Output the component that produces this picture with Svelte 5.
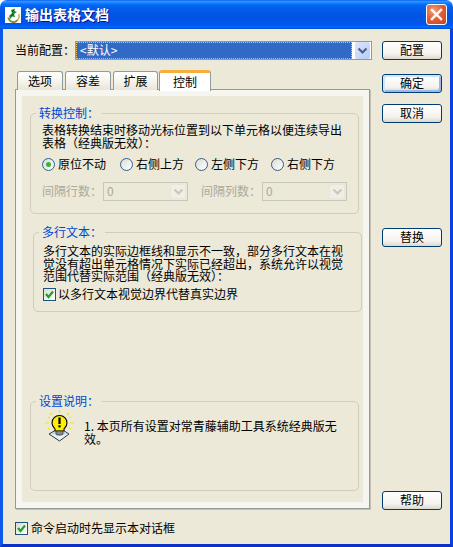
<script>
  const tabs = [
    { label: '选项', w: 46 },
    { label: '容差', w: 46 },
    { label: '扩展', w: 45 },
  ];
  const radios = ['原位不动', '右侧上方', '左侧下方', '右侧下方'];
</script>

<div class="window">
  <header class="titlebar">
    <svg class="appicon" width="16" height="16" viewBox="0 0 16 16">
      <rect width="16" height="16" fill="#fff" />
      <path d="M3.5 10.5a5 5 0 0 0 9 2.5" fill="none" stroke="#8a8a3a" stroke-width="2" />
      <path d="M12.5 13a5 5 0 0 0 1-6" fill="none" stroke="#b8b860" stroke-width="1.5" />
      <path d="M4 9 L7 6 L6 3 L10 1.5 L9.5 4 L12 5 L9 7 L10 10 L7 9.5 L5.5 12 Z" fill="#1f8a2e" />
      <path d="M7 5 L9 3 M6 9 L9 7" stroke="#0d4f1a" stroke-width="1" fill="none" />
    </svg>
    <span class="title">输出表格文档</span>
    <button class="close" aria-label="关闭">
      <svg width="13" height="13" viewBox="0 0 13 13">
        <path d="M2 2 L11 11 M11 2 L2 11" stroke="#fff" stroke-width="2.4" stroke-linecap="square" />
      </svg>
    </button>
  </header>

  <div class="client">
    <div class="main">
      <div class="left">
        <div class="config">
          <span class="config-label">当前配置：</span>
          <div class="combo">
            <div class="combo-value"><span>&lt;默认&gt;</span></div>
            <div class="combo-btn">
              <svg width="11" height="8" viewBox="0 0 11 8"><path d="M1.5 1.5 L5.5 5.5 L9.5 1.5" fill="none" stroke="#4d6185" stroke-width="2.2" /></svg>
            </div>
          </div>
        </div>

        <div class="tabs">
          {#each tabs as t}
            <div class="tab" style="width:{t.w}px">{t.label}</div>
          {/each}
          <div class="tab active">控制</div>
        </div>

        <div class="panel">
          <div class="inner">
            <fieldset class="group g1">
              <legend>转换控制：</legend>
              <p class="txt">表格转换结束时移动光标位置到以下单元格以便连续导出表格（经典版无效）：</p>
              <div class="radios">
                {#each radios as r, i}
                  <div class="radio-item">
                    <span class="radio" class:on={i === 0}></span>
                    <span>{r}</span>
                  </div>
                {/each}
              </div>
              <div class="spins">
                <span class="dis-label">间隔行数：</span>
                <div class="dis-combo"><span>0</span><i><svg width="11" height="8" viewBox="0 0 11 8"><path d="M1.5 1.5 L5.5 5.5 L9.5 1.5" fill="none" stroke="#c9c7ba" stroke-width="2.2" /></svg></i></div>
                <span class="dis-label second">间隔列数：</span>
                <div class="dis-combo"><span>0</span><i><svg width="11" height="8" viewBox="0 0 11 8"><path d="M1.5 1.5 L5.5 5.5 L9.5 1.5" fill="none" stroke="#c9c7ba" stroke-width="2.2" /></svg></i></div>
              </div>
            </fieldset>

            <fieldset class="group g2">
              <legend>多行文本：</legend>
              <p class="txt">多行文本的实际边框线和显示不一致，部分多行文本在视觉没有超出单元格情况下实际已经超出，系统允许以视觉范围代替实际范围（经典版无效）：</p>
              <div class="check-row inner-check">
                <span class="check">
                  <svg width="11" height="11" viewBox="0 0 11 11"><path d="M2 5 L4.5 8 L9 2.5" fill="none" stroke="#21a121" stroke-width="2.2" /></svg>
                </span>
                <span>以多行文本视觉边界代替真实边界</span>
              </div>
            </fieldset>

            <fieldset class="group g3">
              <legend>设置说明：</legend>
              <div class="note">
                <svg class="bulb" width="32" height="32" viewBox="0 0 32 32">
                  <path d="M16.5 18 L26 24 L16.5 31 L6 24 Z" fill="#e8f4f8" stroke="#333" stroke-width="1" />
                  <path d="M8 24 L16.5 18 L25 24 L16.5 25 Z" fill="#a8dce8" />
                  <path d="M16.5 0 V3 M7 3 L9 5 M26 3 L24 5 M2 13 H6 M27 13 H31 M5 7 L7 8 M28 7 L26 8 M5 19 L7 18 M28 19 L26 18" stroke="#f5e800" stroke-width="1.2" />
                  <path d="M9 13 a7.5 7.5 0 0 1 15 0 c0 3-2 4.5-3 6 v2 h-9 v-2 c-1-1.5-3-3-3-6z" fill="#ffef00" stroke="#000" stroke-width="1.1" />
                  <rect x="13" y="21" width="7" height="4" rx="1.5" fill="#8a8a8a" stroke="#333" stroke-width="0.8" />
                  <rect x="15.4" y="7.5" width="2.2" height="6.5" fill="#000" />
                  <rect x="15.4" y="15.2" width="2.2" height="2.2" fill="#000" />
                </svg>
                <p class="txt note-txt">1. 本页所有设置对常青藤辅助工具系统经典版无效。</p>
              </div>
            </fieldset>
          </div>
        </div>

        <div class="check-row startup">
          <span class="check">
            <svg width="11" height="11" viewBox="0 0 11 11"><path d="M2 5 L4.5 8 L9 2.5" fill="none" stroke="#21a121" stroke-width="2.2" /></svg>
          </span>
          <span>命令启动时先显示本对话框</span>
        </div>
      </div>

      <div class="right">
        <button class="btn">配置</button>
        <button class="btn default b-ok">确定</button>
        <button class="btn b-cancel">取消</button>
        <button class="btn b-replace">替换</button>
        <button class="btn b-help">帮助</button>
      </div>
    </div>
  </div>
</div>

<style>
  :global(body) {
    margin: 0;
    background: #fff;
  }
  .window {
    width: 453px;
    height: 547px;
    display: flex;
    flex-direction: column;
    font-family: "Noto Sans CJK SC", "Liberation Sans", sans-serif;
    font-size: 12px;
    line-height: 12.5px;
    color: #000;
    overflow: hidden;
  }
  .titlebar {
    height: 29px;
    flex: none;
    display: flex;
    align-items: center;
    padding: 0 6px 0 5px;
    box-sizing: border-box;
    border-radius: 7px 7px 0 0;
    background: linear-gradient(180deg, #0058ee 0%, #3593ff 4%, #288eff 7%, #127dff 11%, #036ffc 15%, #0262ee 22%, #0057e5 44%, #0054e3 62%, #0055eb 80%, #005bf5 89%, #026afe 92%, #0062ef 95%, #0052d6 100%);
  }
  .appicon {
    flex: none;
  }
  .title {
    margin-left: 4px;
    font-size: 14px;
    font-weight: 700;
    color: #fff;
    text-shadow: 1px 1px 0 #0f1089;
    flex: 1;
  }
  .close {
    width: 21px;
    height: 21px;
    padding: 0;
    border: 1px solid #fff;
    border-radius: 3px;
    background: radial-gradient(circle at 35% 30%, #f0a080 0%, #e2603a 45%, #c8401c 100%);
    display: flex;
    align-items: center;
    justify-content: center;
  }
  .client {
    flex: 1;
    min-height: 0;
    display: flex;
    background: #ece9d8;
    border-left: 3px solid #0f58ea;
    border-right: 3px solid #0a3fe0;
    border-bottom: 3px solid #0a31c8;
  }
  .main {
    flex: 1;
    display: flex;
    padding: 12px 0 0 12px;
    gap: 12px;
  }
  .left {
    width: 355px;
    display: flex;
    flex-direction: column;
  }
  .config {
    display: flex;
    align-items: center;
    height: 19px;
  }
  .config-label {
    width: 60px;
  }
  .combo {
    width: 297px;
    height: 19px;
    box-sizing: border-box;
    border: 1px solid #7f9db9;
    background: #fff;
    display: flex;
    padding: 0 1px 0 0;
    flex: none;
    margin-right: -2px;
  }
  .combo-value {
    width: 276px;
    background: #316ac5;
    color: #fff;
    outline: 1px dotted #e8c060;
    outline-offset: -1px;
    display: flex;
    align-items: center;
    padding-left: 4px;
    box-sizing: border-box;
  }
  .combo-btn {
    width: 15px;
    margin: 0 0 0 3px;
    background: linear-gradient(135deg, #dbe5fd, #b8cbf9);
    border-radius: 2px;
    display: flex;
    align-items: center;
    justify-content: center;
  }
  .tabs {
    display: flex;
    margin-top: 11px;
    padding-left: 2px;
    height: 19px;
    gap: 2px;
    align-items: flex-start;
    position: relative;
    z-index: 1;
  }
  .tab {
    height: 19px;
    box-sizing: border-box;
    border: 1px solid #919b9c;
    border-bottom: none;
    border-radius: 3px 3px 0 0;
    background: linear-gradient(180deg, #fff, #f3f2ea 60%, #e8e6da);
    display: flex;
    align-items: center;
    justify-content: center;
  }
  .tab.active {
    width: 52px;
    height: 21px;
    margin-top: -1px;
    margin-left: -1px;
    border-top: 3px solid #f5b03c;
    background: #fff;
    padding-top: 1px;
  }
  .panel {
    height: 420px;
    box-sizing: border-box;
    border: 1px solid #919b9c;
    margin-top: -1px;
    background: #f6f5ef;
    padding: 6px;
    box-shadow: 1px 1px 0 #c4c1b0;
  }
  .inner {
    height: 100%;
    background: #ece9d8;
    display: flex;
    flex-direction: column;
    align-items: flex-start;
  }
  .group {
    box-sizing: border-box;
    width: 329px;
    margin: 0;
    padding: 0 0 0 11px;
    border: 1px solid #d0cebb;
    border-radius: 5px;
    min-width: 0;
  }
  .group legend {
    padding: 0 3px;
    margin-left: -6px;
    color: #0046d5;
    line-height: 14px;
  }
  .g1 {
    margin: 10px 0 0 8px;
    height: 108px;
  }
  .g2 {
    margin: 11px 0 0 11px;
    height: 87px;
    padding-left: 9px;
  }
  .g2 legend {
    margin-left: -4px;
  }
  .g2 .txt {
    margin-top: 6px;
  }
  .g3 {
    margin: 82px 0 0 8px;
    height: 97px;
  }
  .txt {
    margin: 4px 0 0 0;
    width: 301px;
  }
  .radios {
    display: grid;
    grid-template-columns: 78px 75px 76px auto;
    margin-top: 8px;
  }
  .radio-item {
    display: flex;
    align-items: center;
    gap: 3px;
    height: 14px;
  }
  .radio {
    width: 13px;
    height: 13px;
    box-sizing: border-box;
    border: 1px solid #2f5f8f;
    border-radius: 50%;
    background: linear-gradient(135deg, #dcdcd4, #fff);
    display: flex;
    align-items: center;
    justify-content: center;
  }
  .radio.on::after {
    content: "";
    width: 5px;
    height: 5px;
    border-radius: 50%;
    background: #36b536;
  }
  .spins {
    display: flex;
    align-items: center;
    margin-top: 11px;
    color: #aca899;
  }
  .dis-label {
    width: 61px;
  }
  .dis-label.second {
    width: 61px;
    margin-left: 13px;
  }
  .dis-combo {
    width: 85px;
    height: 19px;
    box-sizing: border-box;
    border: 1px solid #c9c7ba;
    display: flex;
    align-items: center;
    justify-content: space-between;
    padding: 1px 1px 1px 3px;
  }
  .dis-combo i {
    width: 16px;
    height: 15px;
    background: #f0efe6;
    border: 1px solid #e8e6d8;
    box-sizing: border-box;
    border-radius: 2px;
    display: flex;
    align-items: center;
    justify-content: center;
  }
  .check-row {
    display: flex;
    align-items: center;
    gap: 3px;
    margin-top: 5px;
  }
  .inner-check {
    gap: 2px;
  }
  .check {
    width: 13px;
    height: 13px;
    box-sizing: border-box;
    border: 1px solid #1c5180;
    background: linear-gradient(135deg, #dcdcd4, #fff);
    display: flex;
    align-items: center;
    justify-content: center;
    flex: none;
  }
  .note {
    display: flex;
    align-items: flex-start;
    margin-left: 1px;
  }
  .bulb {
    flex: none;
    margin-top: 2px;
  }
  .note-txt {
    width: 258px;
    margin: 12px 0 0 9px;
  }
  .startup {
    margin-top: 13px;
  }
  .right {
    width: 60px;
    display: flex;
    flex-direction: column;
  }
  .btn {
    width: 60px;
    height: 19px;
    padding: 0;
    font: inherit;
    color: #000;
    border: 1px solid #003c74;
    border-radius: 3px;
    background: linear-gradient(180deg, #fff, #f4f3ee 70%, #dcd8cc);
    display: flex;
    align-items: center;
    justify-content: center;
  }
  .btn.default {
    box-shadow: inset 2px 2px 0 #cee7ff, inset -2px -2px 0 #9ab8e8;
  }
  .b-ok { margin-top: 14px; }
  .b-cancel { margin-top: 11px; }
  .b-replace { margin-top: 105px; }
  .b-help { margin-top: 244px; }
</style>
